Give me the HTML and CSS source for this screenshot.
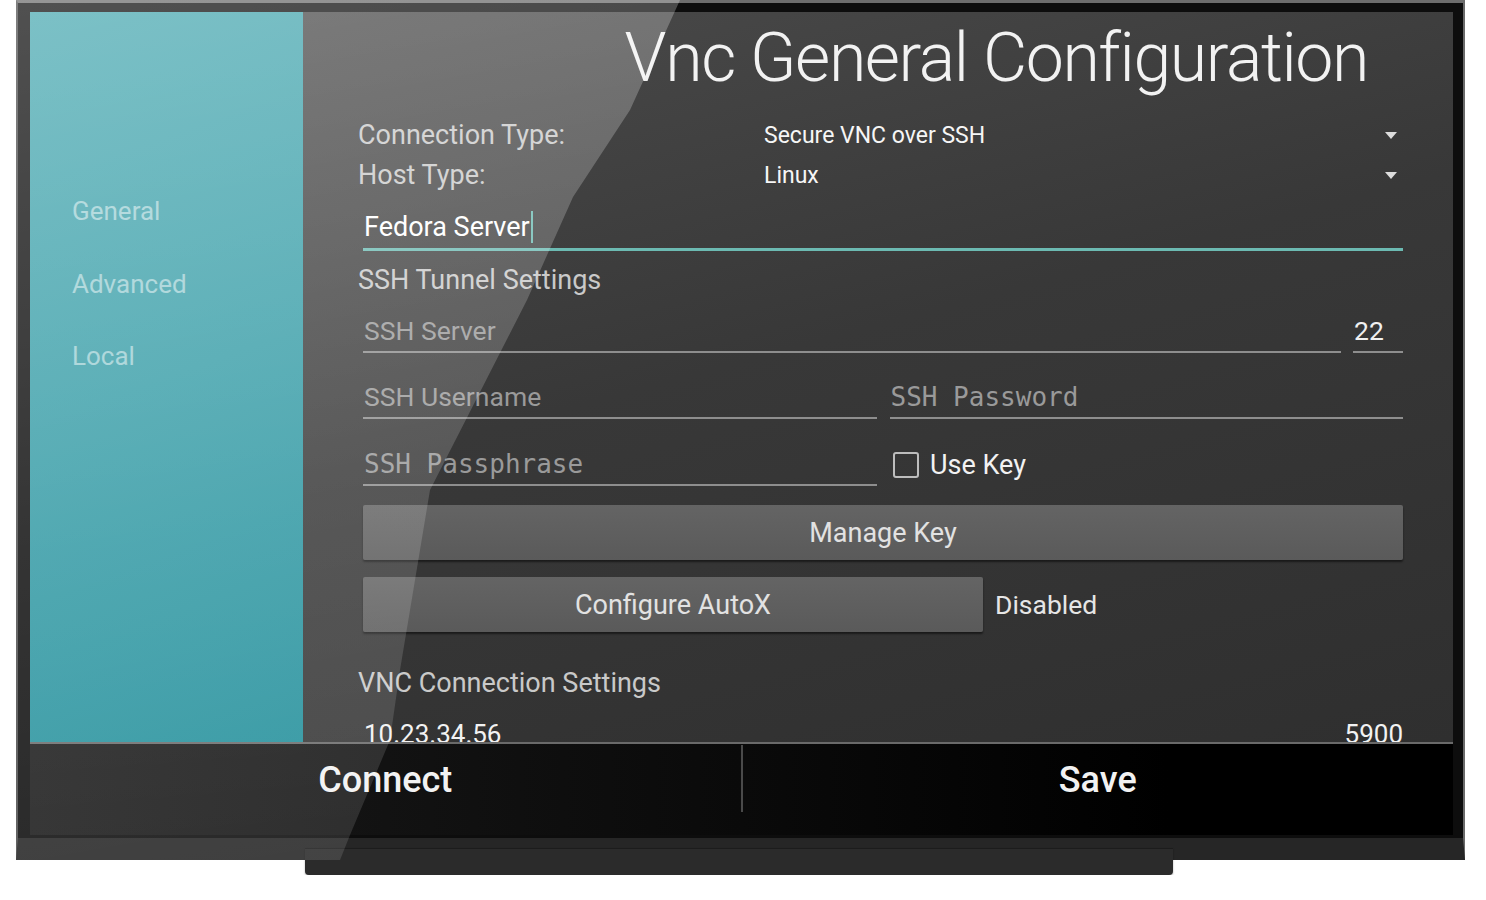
FILE: index.html
```html
<!DOCTYPE html>
<html lang="en">
<head>
<meta charset="utf-8">
<title>Vnc General Configuration</title>
<link rel="stylesheet" href="styles.css">
</head>
<body>
<div class="tv">
  <div class="screen">
    <div class="content">
      <nav class="sidebar">
        <span class="nav-item">General</span>
        <span class="nav-item">Advanced</span>
        <span class="nav-item">Local</span>
      </nav>
      <main class="main">
        <h1 class="title">Vnc General Configuration</h1>
        <div class="spinner">
          <span class="spinner-label">Connection Type:</span>
          <span class="spinner-value">Secure VNC over SSH</span>
          <svg class="caret" viewBox="0 0 12 7"><path d="M0 0H12L6 7Z"/></svg>
        </div>
        <div class="spinner">
          <span class="spinner-label">Host Type:</span>
          <span class="spinner-value">Linux</span>
          <svg class="caret" viewBox="0 0 12 7"><path d="M0 0H12L6 7Z"/></svg>
        </div>
        <div class="text-input"><span>Fedora Server</span><span class="cursor"></span></div>
        <div class="section">SSH Tunnel Settings</div>
        <div class="field-row row-server">
          <div class="field">SSH Server</div>
          <div class="field port">22</div>
        </div>
        <div class="field-row row-user">
          <div class="field">SSH Username</div>
          <div class="field mono">SSH Password</div>
        </div>
        <div class="field-row row-pass">
          <div class="field mono half">SSH Passphrase</div>
          <label class="check"><span class="checkbox"></span><span class="check-label">Use Key</span></label>
        </div>
        <div class="btn btn-manage">Manage Key</div>
        <div class="autox-row">
          <div class="btn btn-autox">Configure AutoX</div>
          <span class="status">Disabled</span>
        </div>
        <div class="section vnc">VNC Connection Settings</div>
        <div class="vnc-row"><span>10.23.34.56</span><span>5900</span></div>
      </main>
    </div>
    <div class="actions">
      <div class="action">Connect</div>
      <div class="divider"></div>
      <div class="action">Save</div>
    </div>
  </div>
  <div class="glare"></div>
</div>
<div class="stand"></div>
</body>
</html>
```
FILE: styles.css
```css
html, body {
  margin: 0;
  background: #ffffff;
  font-family: Roboto, "Liberation Sans", sans-serif;
}

.tv {
  position: relative;
  width: 1449px;
  height: 860px;
  margin-left: 16px;
  box-sizing: border-box;
  border-top: 3px solid #6d6d6d;
  border-left: 2px solid #4d4d4d;
  border-right: 2px solid #6a6a6a;
  border-bottom: 22px solid #262626;
  background: #0d0d0d;
  padding: 9px 10px 3px 12px;
}

.screen {
  width: 1423px;
  height: 823px;
  display: flex;
  flex-direction: column;
}

.content {
  display: flex;
  height: 730px;
  flex-shrink: 0;
}

.sidebar {
  width: 273px;
  flex: none;
  box-sizing: border-box;
  padding: 181px 0 0 42px;
  display: flex;
  flex-direction: column;
  gap: 36.5px;
  background: linear-gradient(160deg, #4aa9b1 0%, #379da7 50%, #228f9b 100%);
}

.nav-item {
  font-size: 26px;
  line-height: 36px;
  color: rgba(255, 255, 255, 0.5);
}

.main {
  flex: 1;
  box-sizing: border-box;
  padding: 0 50px 0 55px;
  overflow: hidden;
  display: flex;
  flex-direction: column;
  background: linear-gradient(165deg, #4a4a4a 0%, #383838 45%, #2f2f2f 100%);
}

.main > * {
  flex-shrink: 0;
}

.title {
  margin: 0 0 11px;
  height: 92px;
  font-size: 68px;
  font-weight: 300;
  letter-spacing: -1.4px;
  line-height: 92px;
  text-align: right;
  padding-right: 35px;
  color: #f2f2f2;
}

.spinner {
  display: flex;
  align-items: center;
  height: 40px;
}

.spinner-label {
  width: 406px;
  font-size: 27px;
  color: #c9c9c9;
}

.spinner-value {
  flex: 1;
  font-size: 23px;
  color: #f6f6f6;
}

.caret {
  width: 12px;
  height: 7px;
  margin-right: 6px;
  fill: #dddddd;
}

.text-input {
  display: flex;
  align-items: center;
  margin: 16px 0 0 5px;
  padding: 0 0 5px 1px;
  border-bottom: 3px solid #6cbab2;
  font-size: 27px;
  line-height: 30px;
  color: #ffffff;
}

.cursor {
  width: 2px;
  height: 32px;
  margin-left: 1px;
  background: #6cbab2;
}

.section {
  margin-top: 14px;
  font-size: 27px;
  line-height: 30px;
  color: #c9c9c9;
}

.field-row {
  display: flex;
  gap: 12px;
  margin-left: 5px;
}

.row-server { margin-top: 21px; }
.row-user { margin-top: 29px; gap: 13px; }
.row-pass { margin-top: 30px; align-items: flex-start; }

.field {
  flex: 1;
  padding: 0 0 5px 1px;
  border-bottom: 2px solid #8e8e8e;
  font-size: 26.5px;
  line-height: 30px;
  color: #9a9a9a;
  white-space: nowrap;
}

.field.port {
  flex: 0 0 49px;
  color: #f0f0f0;
}

.field.half {
  flex: 0 0 513px;
}

.field.mono {
  font-family: "DejaVu Sans Mono", "Liberation Mono", monospace;
  font-size: 26px;
}

.check {
  display: flex;
  align-items: center;
  gap: 11px;
  height: 32px;
  margin-left: 4px;
}

.checkbox {
  width: 22px;
  height: 22px;
  border: 2px solid #bdbdbd;
  border-radius: 3px;
}

.check-label {
  font-size: 27px;
  color: #f2f2f2;
}

.btn {
  height: 55px;
  display: flex;
  align-items: center;
  justify-content: center;
  border-radius: 2px;
  background: linear-gradient(180deg, #646464, #5a5a5a);
  box-shadow: 0 2px 2px rgba(0, 0, 0, 0.5);
  font-size: 27px;
  color: #e2e2e2;
}

.btn-manage {
  margin: 19px 0 0 5px;
}

.autox-row {
  display: flex;
  align-items: center;
  gap: 12px;
  margin: 17px 0 0 5px;
}

.btn-autox {
  width: 620px;
}

.status {
  font-size: 26.5px;
  color: #e6e6e6;
}

.section.vnc {
  margin-top: 36px;
}

.vnc-row {
  display: flex;
  justify-content: space-between;
  margin: 26px 0 0 5px;
  padding-left: 1px;
  font-size: 26px;
  line-height: 20px;
  color: #f2f2f2;
}

.actions {
  display: flex;
  align-items: flex-start;
  flex-shrink: 0;
  height: 93px;
  box-sizing: border-box;
  border-top: 2px solid #6a6a6a;
  background: linear-gradient(90deg, #1a1a1a 0%, #0a0a0a 50%, #000000 80%);
}

.action {
  flex: 1;
  height: 68px;
  box-sizing: border-box;
  padding-top: 4px;
  display: flex;
  align-items: center;
  justify-content: center;
  font-size: 36px;
  font-weight: 500;
  color: #f2f2f2;
}

.divider {
  width: 2px;
  height: 67px;
  margin-top: 1px;
  background: #4a4a4a;
}

.glare {
  position: absolute;
  top: -3px;
  left: -2px;
  right: -2px;
  bottom: -22px;
  z-index: 2;
  pointer-events: none;
  background: linear-gradient(170deg, rgba(255, 255, 255, 0.28) 0%, rgba(255, 255, 255, 0.16) 50%, rgba(255, 255, 255, 0.09) 100%);
  clip-path: polygon(0 0, 664px 0, 614px 110px, 557px 197px, 511px 300px, 414px 490px, 384px 670px, 374px 740px, 334px 835px, 324px 860px, 0 860px);
}

.stand {
  position: relative;
  z-index: 1;
  width: 868px;
  height: 27px;
  margin: -12px 0 0 305px;
  box-sizing: border-box;
  border-top: 1px solid #1c1c1c;
  border-radius: 0 0 4px 4px;
  background: #2b2b2b;
  box-shadow: 0 1px 2px rgba(0, 0, 0, 0.35);
}
```
